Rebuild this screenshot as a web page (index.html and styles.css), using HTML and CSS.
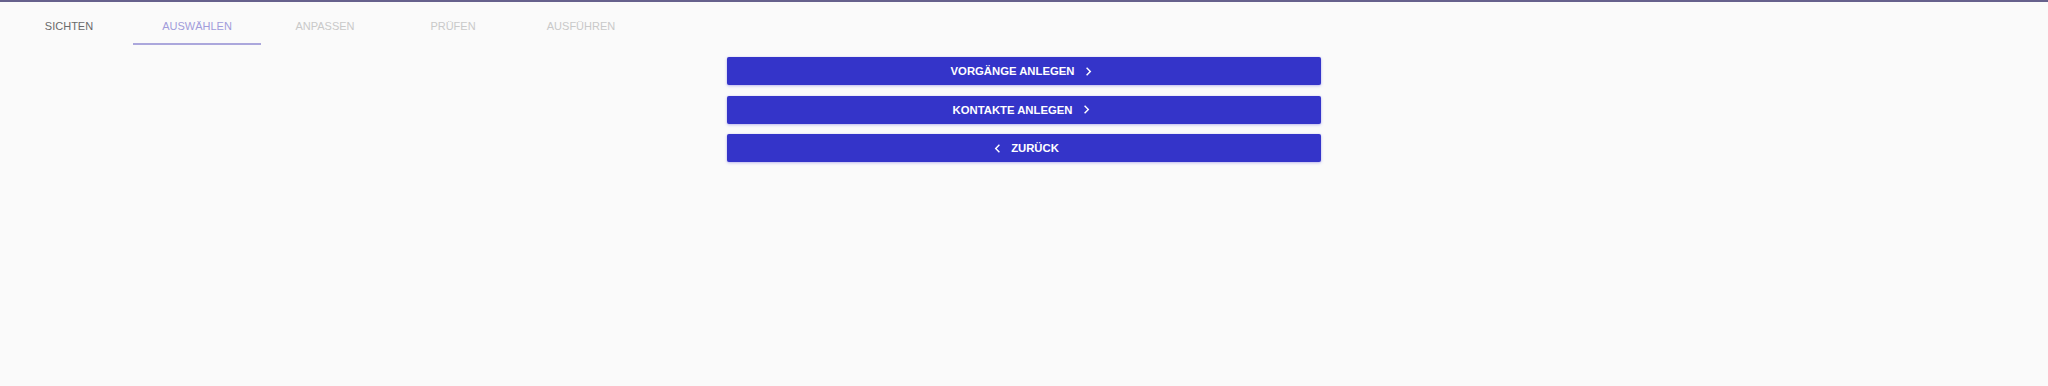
FILE: index.html
```html
<!DOCTYPE html>
<html lang="de">
<head>
<meta charset="utf-8">
<title>Stepper</title>
<link rel="stylesheet" href="styles.css">
</head>
<body>
<div class="tabs">
  <div class="tab done">SICHTEN</div>
  <div class="tab active">AUSWÄHLEN</div>
  <div class="tab">ANPASSEN</div>
  <div class="tab">PRÜFEN</div>
  <div class="tab">AUSFÜHREN</div>
</div>
<div class="actions">
  <button class="btn"><span>VORGÄNGE ANLEGEN</span><svg class="chev" viewBox="0 0 24 24"><path d="M10 6 8.59 7.41 13.17 12l-4.58 4.59L10 18l6-6z"/></svg></button>
  <button class="btn"><span>KONTAKTE ANLEGEN</span><svg class="chev" viewBox="0 0 24 24"><path d="M10 6 8.59 7.41 13.17 12l-4.58 4.59L10 18l6-6z"/></svg></button>
  <button class="btn back"><svg class="chev" viewBox="0 0 24 24"><path d="M15.41 7.41 14 6l-6 6 6 6 1.41-1.41L10.83 12z"/></svg><span>ZURÜCK</span></button>
</div>
</body>
</html>
```
FILE: styles.css
```css
html, body {
  margin: 0;
  padding: 0;
  background: #fafafa;
}
body {
  border-top: 2px solid #66618c;
  font-family: "Liberation Sans", Arial, sans-serif;
  height: 384px;
}
.tabs {
  display: flex;
  padding-left: 5px;
}
.tab {
  width: 128px;
  height: 35px;
  padding-top: 6px;
  display: flex;
  align-items: center;
  justify-content: center;
  font-size: 11px;
  color: #c9c9c9;
  border-bottom: 2px solid transparent;
}
.tab.done {
  color: #6a6a6a;
}
.tab.active {
  color: #a19cdb;
  border-bottom-color: #aba7dc;
}
.actions {
  display: flex;
  flex-direction: column;
  align-items: center;
  gap: 10.5px;
  margin-top: 12px;
}
.btn {
  width: 594px;
  height: 28px;
  border: none;
  border-radius: 2px;
  background: #3434c9;
  color: #ffffff;
  font-family: "Liberation Sans", Arial, sans-serif;
  font-size: 11.3px;
  font-weight: bold;
  display: flex;
  align-items: center;
  justify-content: center;
  gap: 6px;
  padding: 0;
  box-shadow: 0 1px 3px rgba(80, 70, 220, 0.35), 0 0 1px rgba(80, 70, 220, 0.3);
}
.chev {
  width: 17px;
  height: 17px;
  fill: #ffffff;
}
.back {
  gap: 5px;
}
```
